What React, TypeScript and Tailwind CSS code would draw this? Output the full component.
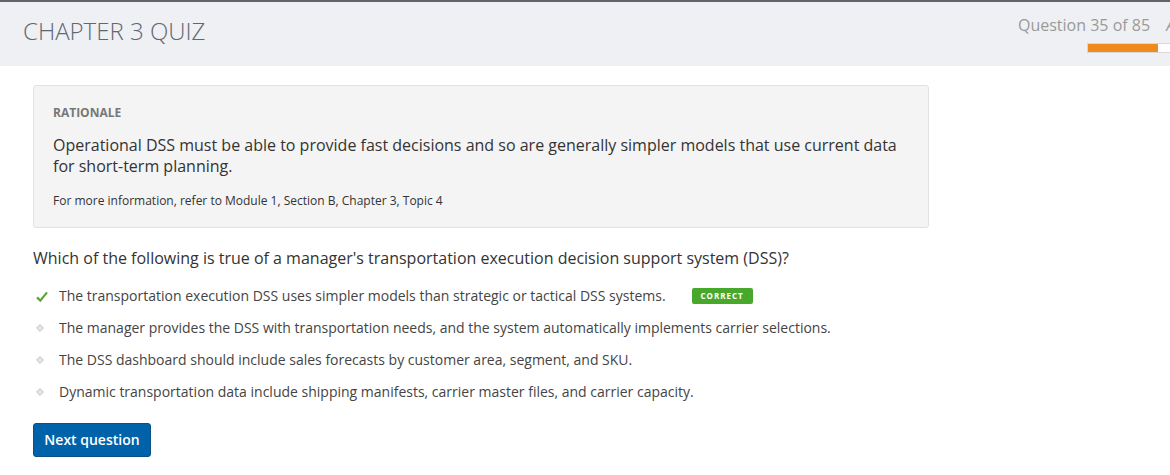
import React from "react";

const options = [
  "The transportation execution DSS uses simpler models than strategic or tactical DSS systems.",
  "The manager provides the DSS with transportation needs, and the system automatically implements carrier selections.",
  "The DSS dashboard should include sales forecasts by customer area, segment, and SKU.",
  "Dynamic transportation data include shipping manifests, carrier master files, and carrier capacity.",
];

export default function App() {
  return (
    <div className="w-[1170px] h-[475px] overflow-hidden bg-white text-[#333]" style={{ fontFamily: '"Open Sans", "Liberation Sans", sans-serif' }}>
      <div className="h-[66px] border-t-2 border-[#5f646b] bg-[#eff0f3] flex overflow-hidden">
        <div className="flex-1 pl-[23px] pt-[14px]">
          <div className="text-[24px] font-light leading-[30px] text-[#5e6873]">CHAPTER 3 QUIZ</div>
        </div>
        <div className="w-[152px] shrink-0 flex flex-col pt-[12px]">
          <div className="flex items-center whitespace-nowrap h-[22px]">
            <span className="text-[16px] leading-[22px] text-[#9a9a9a]">Question 35 of 85</span>
            <span className="ml-[16px] text-[16px] leading-[22px] text-[#9a9a9a] italic">A</span>
          </div>
          <div className="ml-[69px] mt-[7px] w-[100px] h-[10px] shrink-0 border border-[#d8d8d8] bg-white flex">
            <div className="w-[70px] h-full bg-[#f18a1c]" />
          </div>
        </div>
      </div>
      <div className="pl-[33px]">
        <div className="mt-[19px] w-[896px] h-[143px] rounded-[3px] border border-[#e2e2e2] bg-[#f4f4f4] px-[19px] pt-[19px]">
          <div className="text-[12px] font-bold leading-[16px] text-[#777]">RATIONALE</div>
          <div className="mt-[14px] text-[16px] leading-[21px] text-[#333]">
            Operational DSS must be able to provide fast decisions and so are generally simpler models that use current data for short-term planning.
          </div>
          <div className="mt-[16px] text-[12px] leading-[16px] text-[#333]">
            For more information, refer to Module 1, Section B, Chapter 3, Topic 4
          </div>
        </div>
        <div className="mt-[19px] text-[16px] leading-[22px] text-[#333]">
          Which of the following is true of a manager's transportation execution decision support system (DSS)?
        </div>
        <div className="mt-[17px] flex flex-col gap-[12px]">
          {options.map((o, i) => (
            <div key={i} className="flex items-center h-[20px]">
              <div className="w-[26px] flex items-center justify-start">
                {i === 0 ? (
                  <svg width="12" height="11" viewBox="0 0 12 11" className="ml-[3px]">
                    <path d="M1 6.4 L4.3 9.6 L11 1.4" fill="none" stroke="#5fa236" strokeWidth="2.2" />
                  </svg>
                ) : (
                  <svg width="8" height="8" viewBox="0 0 8 8" className="ml-[3px]">
                    <path d="M4 0.6 L7.4 4 L4 7.4 L0.6 4 Z" fill="#e4e4e4" stroke="#c4c4c4" strokeWidth="1" />
                  </svg>
                )}
              </div>
              <span className="text-[14px] leading-[20px] text-[#444]">{o}</span>
              {i === 0 && (
                <span className="ml-[26px] w-[61px] h-[16px] rounded-[2px] bg-[#48a82c] text-white text-[8px] font-bold tracking-[1px] flex items-center justify-center">
                  CORRECT
                </span>
              )}
            </div>
          ))}
        </div>
        <button className="mt-[21px] h-[34px] w-[118px] rounded-[3px] border border-[#0a4f86] bg-[#0063a9] text-white text-[14px] font-semibold leading-[20px]">
          Next question
        </button>
      </div>
    </div>
  );
}
